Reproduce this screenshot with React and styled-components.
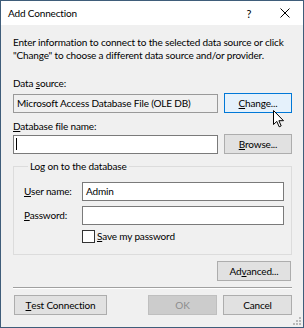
import React from "react";
import styled, { createGlobalStyle } from "styled-components";

const Global = createGlobalStyle`
  html, body {
    margin: 0;
    padding: 0;
    background: #ffffff;
  }
  * {
    box-sizing: border-box;
  }
`;

const App = () => {
  return (
    <>
      <Global />
      <Window>
        <TitleBar>
          <Title>Add Connection</Title>
          <Caption>
            <HelpGlyph>?</HelpGlyph>
            <CloseGlyph>
              <svg width="10" height="10" viewBox="0 0 10 10">
                <path d="M0.5 0.5 L9.5 9.5 M9.5 0.5 L0.5 9.5" stroke="#000" strokeWidth="1" />
              </svg>
            </CloseGlyph>
          </Caption>
        </TitleBar>
        <Body>
          <Intro>
            Enter information to connect to the selected data source or click
            <br />
            "Change" to choose a different data source and/or provider.
          </Intro>

          <Label top={16}>
            Data <u>s</u>ource:
          </Label>
          <FieldRow>
            <TextBox readOnly>Microsoft Access Database File (OLE DB)</TextBox>
            <Button hot>
              <u>C</u>hange...
            </Button>
          </FieldRow>

          <Label top={7}>
            <u>D</u>atabase file name:
          </Label>
          <FieldRow gapTop={1}>
            <TextBox>
              <Caret />
            </TextBox>
            <Button>
              <u>B</u>rowse...
            </Button>
          </FieldRow>

          <Group>
            <Legend>Log on to the database</Legend>
            <LoginRow first>
              <LoginLabel>
                <u>U</u>ser name:
              </LoginLabel>
              <TextBox>Admin</TextBox>
            </LoginRow>
            <LoginRow>
              <LoginLabel>
                <u>P</u>assword:
              </LoginLabel>
              <TextBox />
            </LoginRow>
            <CheckRow>
              <CheckBox />
              <span>
                <u>S</u>ave my password
              </span>
            </CheckRow>
          </Group>

          <AdvancedRow>
            <Button width={74}>
              Ad<u>v</u>anced...
            </Button>
          </AdvancedRow>

          <Separator />

          <ActionRow>
            <Button width={93}>
              <u>T</u>est Connection
            </Button>
            <Spacer />
            <Button width={69} disabled>
              OK
            </Button>
            <Button width={69}>Cancel</Button>
          </ActionRow>
        </Body>

        <Pointer>
          <svg width="12" height="18" viewBox="0 0 12 18">
            <path
              d="M0.5 0.5 L0.5 14.5 L3.8 11.4 L6.2 16.8 L8.2 15.9 L5.9 10.7 L10.5 10.7 Z"
              fill="#fff"
              stroke="#000"
              strokeWidth="1"
              strokeLinejoin="miter"
            />
          </svg>
        </Pointer>
        <Grip>
          <svg width="8" height="8" viewBox="0 0 8 8">
            <rect x="6" y="0" width="2" height="2" fill="#b9b9b9" />
            <rect x="3" y="3" width="2" height="2" fill="#b9b9b9" />
            <rect x="6" y="3" width="2" height="2" fill="#b9b9b9" />
            <rect x="0" y="6" width="2" height="2" fill="#b9b9b9" />
            <rect x="3" y="6" width="2" height="2" fill="#b9b9b9" />
            <rect x="6" y="6" width="2" height="2" fill="#b9b9b9" />
          </svg>
        </Grip>
      </Window>
    </>
  );
};

export default App;

const Window = styled.div`
  position: relative;
  width: 304px;
  height: 328px;
  display: flex;
  flex-direction: column;
  overflow: hidden;
  border: 1px solid #3f5d7a;
  background: #f0f0f0;
  font-family: Lato, "Noto Sans", sans-serif;
  font-size: 10px;
  letter-spacing: -0.16px;
  color: #000;
  u {
    text-decoration: underline;
    text-underline-offset: 1px;
  }
`;

const TitleBar = styled.div`
  display: flex;
  align-items: center;
  height: 24px;
  padding-left: 7px;
  background: #ffffff;
`;

const Title = styled.div`
  flex: 1;
  font-size: 10px;
  line-height: 13px;
  padding-top: 1px;
`;

const Caption = styled.div`
  display: flex;
  align-items: center;
  height: 100%;
`;

const HelpGlyph = styled.div`
  width: 36px;
  text-align: center;
  font-size: 11px;
  line-height: 13px;
`;

const CloseGlyph = styled.div`
  display: flex;
  align-items: center;
  justify-content: center;
  width: 36px;
  height: 100%;
`;

const Body = styled.div`
  flex: 1;
  display: flex;
  flex-direction: column;
  padding: 11px 11px 0 12px;
`;

const Intro = styled.div`
  line-height: 12.5px;
  white-space: nowrap;
`;

const Label = styled.div`
  margin-top: ${(p) => p.top}px;
  line-height: 13px;
`;

const FieldRow = styled.div`
  display: flex;
  align-items: center;
  gap: 6px;
  height: 20px;
  margin-top: ${(p) => (p.gapTop !== undefined ? p.gapTop : 3)}px;
`;

const TextBox = styled.div`
  flex: 1;
  display: flex;
  align-items: center;
  height: 19px;
  padding-left: 3px;
  border: 1px solid ${(p) => (p.readOnly ? "#999999" : "#7a7a7a")};
  background: ${(p) => (p.readOnly ? "#f0f0f0" : "#ffffff")};
  line-height: 13px;
  white-space: nowrap;
  overflow: hidden;
`;

const Caret = styled.span`
  display: block;
  width: 1px;
  height: 12px;
  margin-left: -1px;
  background: #000;
`;

const Button = styled.div`
  display: flex;
  align-items: center;
  justify-content: center;
  flex: none;
  width: ${(p) => p.width || 68}px;
  height: 20px;
  border: 1px solid
    ${(p) => (p.hot ? "#0078d7" : p.disabled ? "#bfbfbf" : "#adadad")};
  background: ${(p) => (p.hot ? "#e5f1fb" : p.disabled ? "#cccccc" : "#e1e1e1")};
  color: ${(p) => (p.disabled ? "#8c8c8c" : "#000")};
  line-height: 13px;
  white-space: nowrap;
`;

const Group = styled.fieldset`
  margin: 6px 0 0 0;
  padding: 0 7px 11px 10px;
  border: 1px solid #dcdcdc;
  min-width: 0;
`;

const Legend = styled.legend`
  margin-left: 4px;
  padding: 0 2px;
  line-height: 13px;
`;

const LoginRow = styled.div`
  display: flex;
  align-items: center;
  height: 19px;
  margin-top: ${(p) => (p.first ? 9 : 5)}px;
`;

const LoginLabel = styled.div`
  width: 58px;
  flex: none;
  line-height: 13px;
`;

const CheckRow = styled.div`
  display: flex;
  align-items: center;
  gap: 2px;
  margin-top: 5px;
  padding-left: 58px;
  height: 13px;
  line-height: 13px;
`;

const CheckBox = styled.div`
  width: 13px;
  height: 13px;
  border: 1px solid #333333;
  background: #ffffff;
`;

const AdvancedRow = styled.div`
  display: flex;
  justify-content: flex-end;
  margin-top: 6px;
  padding-right: 1px;
`;

const Separator = styled.div`
  margin-top: 6px;
  height: 2px;
  border-top: 1px solid #a0a0a0;
  border-bottom: 1px solid #ffffff;
`;

const ActionRow = styled.div`
  display: flex;
  gap: 6px;
  margin-top: 6px;
  padding-left: 1px;
`;

const Spacer = styled.div`
  flex: 1;
`;

const Pointer = styled.div`
  position: absolute;
  left: 272px;
  top: 109px;
  width: 12px;
  height: 18px;
  svg {
    display: block;
  }
`;

const Grip = styled.div`
  position: absolute;
  right: 2px;
  bottom: 2px;
  svg {
    display: block;
  }
`;
